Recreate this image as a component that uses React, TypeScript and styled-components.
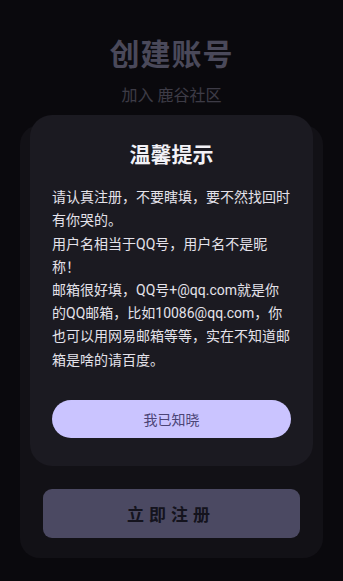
import React from "react";
import styled, { createGlobalStyle } from "styled-components";

const GlobalStyle = createGlobalStyle`
  html, body {
    margin: 0;
    padding: 0;
    background: #15131b;
  }
  body {
    font-family: Roboto, "Noto Sans CJK SC", sans-serif;
    -webkit-font-smoothing: antialiased;
  }
  * { box-sizing: border-box; }
`;

const Page = styled.div`
  width: 343px;
  height: 581px;
  display: flex;
  flex-direction: column;
  align-items: center;
  padding-top: 35px;
  background: #15131b;
  overflow: hidden;
`;

const Title = styled.h1`
  margin: 0;
  font-size: 30px;
  line-height: 40px;
  font-weight: 700;
  color: #9592b4;
  letter-spacing: 1px;
`;

const Subtitle = styled.p`
  margin: 10px 0 0;
  font-size: 16px;
  line-height: 21px;
  color: #7a778c;
`;

const FormCard = styled.div`
  margin-top: 19px;
  align-self: stretch;
  margin-left: 20px;
  margin-right: 20px;
  height: 433px;
  background: #25222d;
  border-radius: 20px;
  padding: 24px 23px 20px;
  display: flex;
  flex-direction: column;
  gap: 16px;
`;

const Field = styled.div`
  height: 52px;
  border-radius: 10px;
  background: #2f2c39;
`;

const Spacer = styled.div`
  flex: 1;
`;

const RegisterButton = styled.button`
  height: 49px;
  border: none;
  border-radius: 9px;
  background: #9693c4;
  color: #29273a;
  font-family: Roboto, "Noto Sans CJK SC", sans-serif;
  font-size: 17px;
  font-weight: 700;
  letter-spacing: 5px;
  padding-left: 5px;
`;

const Overlay = styled.div`
  position: fixed;
  inset: 0;
  background: rgba(0, 0, 0, 0.5);
  display: flex;
  align-items: center;
  justify-content: center;
`;

const Dialog = styled.div`
  width: 283px;
  background: #1b1a21;
  border-radius: 22px;
  padding: 24px 22px 28px;
  display: flex;
  flex-direction: column;
`;

const DialogTitle = styled.h2`
  margin: 0;
  text-align: center;
  font-size: 21px;
  line-height: 32px;
  font-weight: 700;
  color: #f2f1f6;
`;

const Body = styled.div`
  margin-top: 15px;
  font-size: 14px;
  line-height: 23.2px;
  color: #e4e2ea;
`;

const Para = styled.p`
  margin: 0;
`;

const OkButton = styled.button`
  margin-top: 28px;
  height: 38px;
  border: none;
  border-radius: 19px;
  background: #cac4ff;
  color: #4c4576;
  font-family: Roboto, "Noto Sans CJK SC", sans-serif;
  font-size: 14px;
`;

export default function App() {
  return (
    <>
      <GlobalStyle />
      <Page>
        <Title>创建账号</Title>
        <Subtitle>加入 鹿谷社区</Subtitle>
        <FormCard>
          <Field />
          <Field />
          <Field />
          <Field />
          <Spacer />
          <RegisterButton>立即注册</RegisterButton>
        </FormCard>
      </Page>
      <Overlay>
        <Dialog>
          <DialogTitle>温馨提示</DialogTitle>
          <Body>
            <Para>请认真注册，不要瞎填，要不然找回时有你哭的。</Para>
            <Para>用户名相当于QQ号，用户名不是昵称！</Para>
            <Para>
              邮箱很好填，QQ号+@qq.com就是你的QQ邮箱，比如10086@qq.com，你也可以用网易邮箱等等，实在不知道邮箱是啥的请百度。
            </Para>
          </Body>
          <OkButton>我已知晓</OkButton>
        </Dialog>
      </Overlay>
    </>
  );
}
